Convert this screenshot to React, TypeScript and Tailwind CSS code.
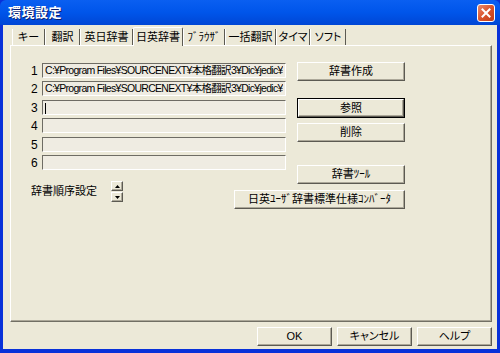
import React from 'react';

const FONT = { fontFamily: '"Liberation Sans", "Noto Sans CJK JP", sans-serif' };

const TABS = [
  { label: 'キー', w: 'w-[33px]' },
  { label: '翻訳', w: 'w-[35px]' },
  { label: '英日辞書', w: 'w-[53px]' },
  { label: '日英辞書', w: 'w-[50px]' },
  { label: 'ﾌﾞﾗｳｻﾞ', w: 'w-[42px]' },
  { label: '一括翻訳', w: 'w-[51px]' },
  { label: 'タイマ', w: 'w-[34px]' },
  { label: 'ソフト', w: 'w-[36px]' },
];
const ACTIVE = 3;

const PATH = 'C:¥Program Files¥SOURCENEXT¥本格翻訳3¥Dic¥jedic¥';

const ROWS = [
  { n: '1', value: PATH, mt: 'mt-0' },
  { n: '2', value: PATH, mt: 'mt-[3px]' },
  { n: '3', value: '', mt: 'mt-[4px]', caret: true },
  { n: '4', value: '', mt: 'mt-[3px]' },
  { n: '5', value: '', mt: 'mt-[4px]' },
  { n: '6', value: '', mt: 'mt-[3px]' },
];

const btn =
  'flex items-center justify-center bg-[#ece9d8] border border-t-white border-l-white border-r-[#5c5a52] border-b-[#5c5a52] shadow-[inset_-1px_-1px_0_#aca899] text-[11px] text-black leading-none';

function Button({ label, className, isDefault }: { label: string; className: string; isDefault?: boolean }) {
  if (isDefault) {
    return (
      <div className={`border border-black ${className}`}>
        <div className={`${btn} w-full h-full`}>{label}</div>
      </div>
    );
  }
  return <div className={`${btn} ${className}`}>{label}</div>;
}

function Arrow({ up }: { up?: boolean }) {
  return (
    <svg width="5" height="3" viewBox="0 0 5 3">
      <polygon points={up ? '2.5,0 5,3 0,3' : '0,0 5,0 2.5,3'} fill="#000" />
    </svg>
  );
}

export default function App() {
  return (
    <div className="w-[500px] h-[353px] bg-[#0831d9] flex flex-col overflow-hidden [font-feature-settings:'palt']" style={FONT}>
      {/* title bar */}
      <div className="h-[25px] shrink-0 flex items-center justify-between pl-[8px] pr-[5px] bg-gradient-to-b from-[#0a5ff1] via-[#0055ea] to-[#0046d5] rounded-t-[6px]">
        <span className="text-white text-[13px] font-bold tracking-[0.5px] [text-shadow:1px_1px_0_#0a1e6e]">環境設定</span>
        <div className="w-[18px] h-[18px] rounded-[3px] border border-white bg-gradient-to-br from-[#e8896b] via-[#d9532b] to-[#c13d16] flex items-center justify-center">
          <svg width="10" height="10" viewBox="0 0 10 10">
            <path d="M1.5 1.5 L8.5 8.5 M8.5 1.5 L1.5 8.5" stroke="#fff" strokeWidth="2" strokeLinecap="square" />
          </svg>
        </div>
      </div>

      {/* body */}
      <div className="flex-1 mx-[3px] mb-[4px] bg-[#ece9d8] flex flex-col text-[11px] text-black">
        {/* tabs */}
        <div className="flex items-end ml-[9px] mt-[3px] h-[17px]">
          {TABS.map((t, i) => (
            <div
              key={t.label}
              className={
                i === ACTIVE
                  ? `${t.w} h-[19px] -mb-px relative z-10 flex items-center justify-center bg-[#ece9d8] border-l border-t border-l-white border-t-white border-r border-r-[#5c5a52] rounded-t-[2px] whitespace-nowrap`
                  : `${t.w} h-[16px] flex items-center justify-center border-l border-l-white border-r border-r-[#5c5a52] whitespace-nowrap`
              }
            >
              {t.label}
            </div>
          ))}
        </div>

        {/* panel */}
        <div className="ml-[7px] w-[482px] h-[277px] border border-t-white border-l-white border-r-[#716f64] border-b-[#716f64] shadow-[inset_-1px_-1px_0_#aca899] pl-[20px] pt-[17px]">
          <div className="flex">
            <div className="flex flex-col w-[255px]">
              {ROWS.map(r => (
                <div key={r.n} className={`flex items-center h-[15px] ${r.mt}`}>
                  <span className="w-[11px] text-[12px]">{r.n}</span>
                  <div className="w-[244px] h-[15px] border border-t-[#6e6c64] border-l-[#6e6c64] border-r-white border-b-white bg-[#efece2] overflow-hidden">
                    <div className="w-[240px] overflow-hidden whitespace-nowrap text-[10.5px] leading-[13px] pl-[2px] tracking-[-0.7px]">
                      {r.value}
                      {r.caret && <span className="inline-block w-px h-[11px] bg-black align-middle" />}
                    </div>
                  </div>
                </div>
              ))}
              <div className="flex items-center mt-[11px]">
                <span className="w-[80px]">辞書順序設定</span>
                <div className="flex flex-col gap-px">
                  <div className={`${btn} w-[12px] h-[10px]`}><Arrow up /></div>
                  <div className={`${btn} w-[12px] h-[10px]`}><Arrow /></div>
                </div>
              </div>
            </div>
            <div className="flex flex-col items-end w-[108px] ml-[11px] -mt-px">
              <Button label="辞書作成" className="w-[108px] h-[19px]" />
              <Button label="参照" className="w-[108px] h-[20px] mt-[17px]" isDefault />
              <Button label="削除" className="w-[108px] h-[19px] mt-[5px]" />
              <Button label="辞書ﾂｰﾙ" className="w-[108px] h-[19px] mt-[23px]" />
              <Button label="日英ﾕｰｻﾞ辞書標準仕様ｺﾝﾊﾞｰﾀ" className="w-[171px] h-[19px] mt-[6px] shrink-0" />
            </div>
          </div>
        </div>

        {/* footer buttons */}
        <div className="flex justify-end gap-[5px] mr-[5px] mt-[5px]">
          <Button label="OK" className="w-[75px] h-[19px]" />
          <Button label="キャンセル" className="w-[75px] h-[19px]" />
          <Button label="ヘルプ" className="w-[75px] h-[19px]" />
        </div>
      </div>
    </div>
  );
}
